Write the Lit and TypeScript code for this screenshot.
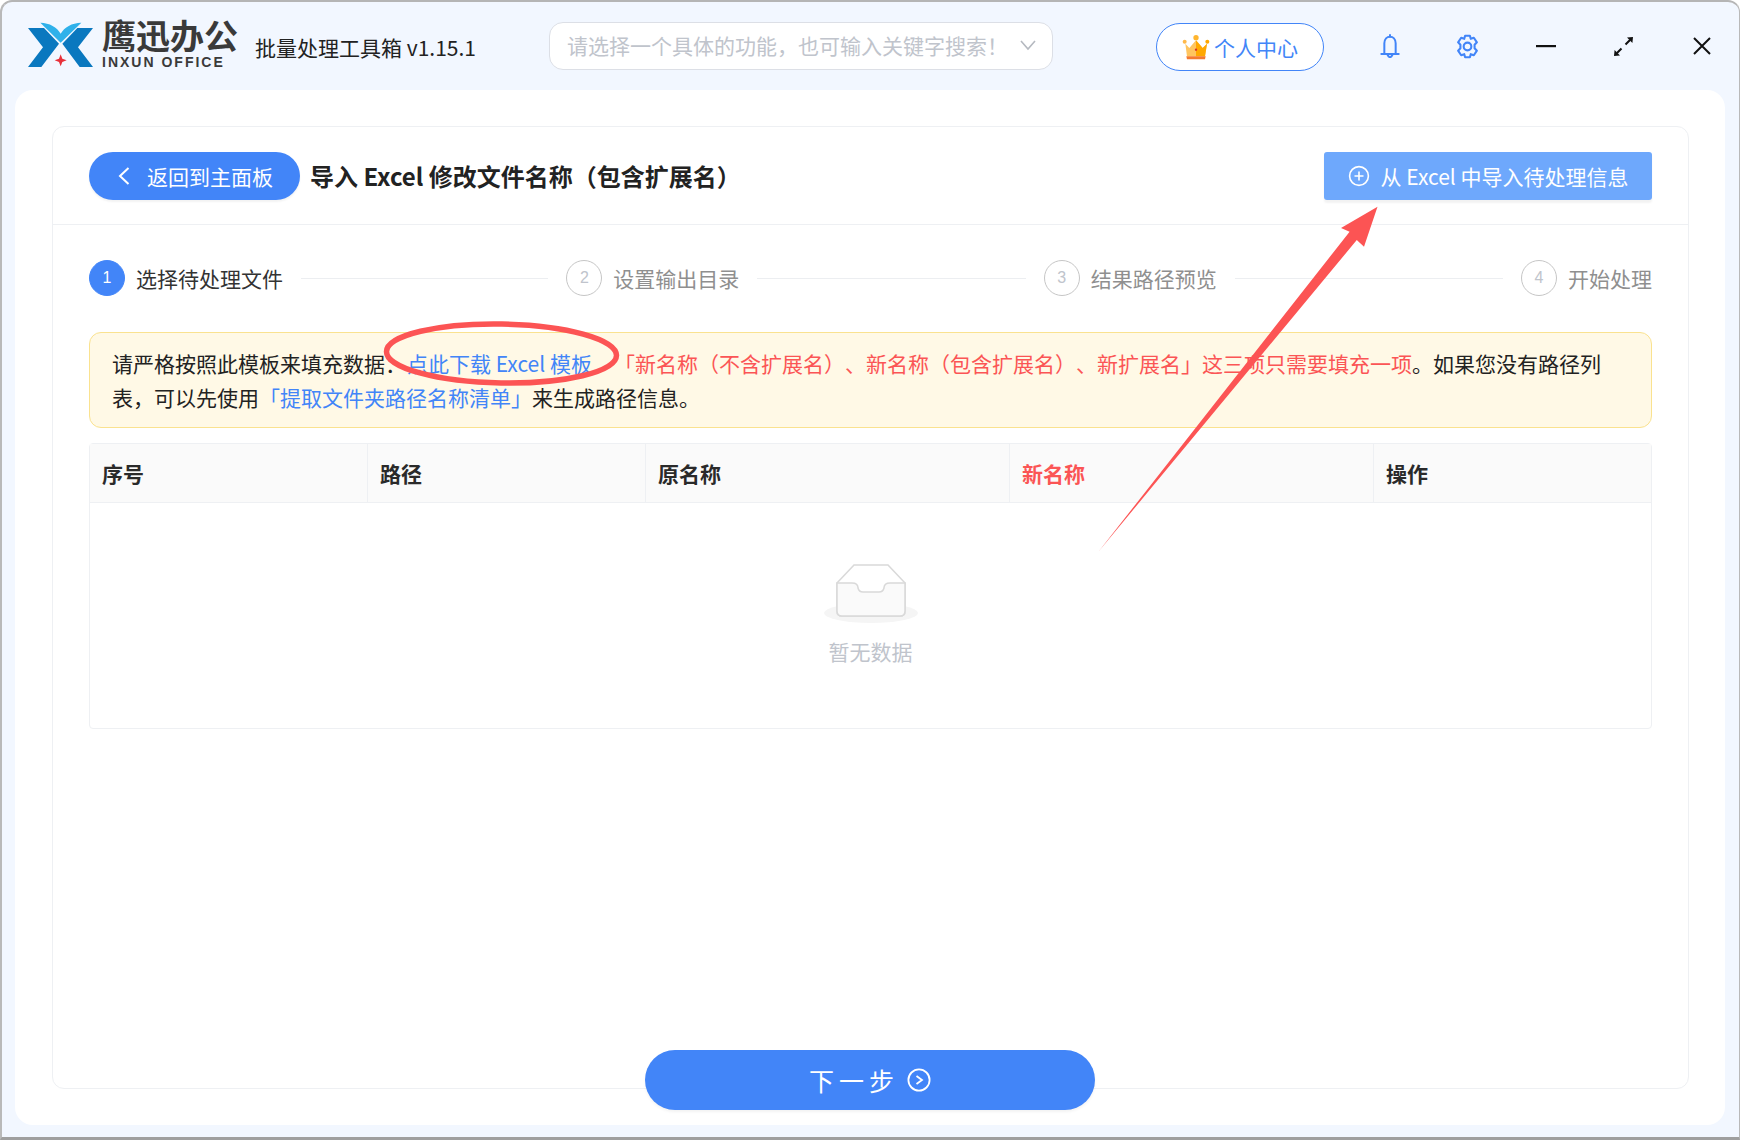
import { LitElement, html, css, svg } from "lit";
import { customElement } from "lit/decorators.js";

const steps = ["选择待处理文件", "设置输出目录", "结果路径预览", "开始处理"];

@customElement("app-root")
export class AppRoot extends LitElement {
  static styles = css`
    :host { display: block; width: 1740px; height: 1140px; font-family: "Noto Sans CJK SC", "Noto Sans", sans-serif; color: #262626; overflow: hidden; background: #fff; text-spacing-trim: space-all; }
    * { box-sizing: border-box; }
    .window { position: relative; width: 1740px; height: 1140px; background: #f2f7ff; border-style: solid; border-width: 2px 1px 3px 2px; border-color: #b5b5b5 #b9b9b9 #9f9f9f #b9b9b9; border-radius: 12px 12px 0 0; display: flex; flex-direction: column; }
    .titlebar { height: 88px; display: flex; align-items: center; flex: none; padding-left: 25px; }
    .logo { width: 67px; height: 46px; flex: none; margin-top: -3px; }
    .brand { margin-left: 8px; width: 139px; display: flex; flex-direction: column; color: #3a3a3a; flex: none; margin-top: -6px; }
    .brand b { font-size: 34px; line-height: 36px; font-weight: 700; white-space: nowrap; }
    .brand span { font-family: "Liberation Sans", sans-serif; font-weight: 700; font-size: 14px; line-height: 14px; letter-spacing: 2px; white-space: nowrap; margin-top: 2px; }
    .appname { margin-left: 14px; font-size: 21px; color: #222; width: 221px; white-space: nowrap; margin-top: 2px; }
    .search { margin-left: 73px; width: 504px; height: 48px; background: #fff; border: 1px solid #dcdfe6; border-radius: 14px; display: flex; align-items: center; justify-content: space-between; padding: 0 15px 2px 17px; color: #c0c4cc; font-size: 21px; flex: none; white-space: nowrap; }
    .search svg { width: 18px; height: 12px; }
    .vip { margin-left: 103px; margin-top: 2px; width: 168px; height: 48px; border: 1px solid #4285f8; border-radius: 24px; background: #fff; display: flex; align-items: center; justify-content: center; gap: 4px; color: #4285f8; font-size: 21px; flex: none; }
    .vip svg { width: 28px; height: 26px; flex: none; }
    .tools { margin-left: 27px; display: flex; align-items: center; }
    .tool { width: 78px; height: 40px; display: flex; align-items: center; justify-content: center; }
    .panel { flex: 1; margin: 0 14px 12px 13px; background: #fff; border-radius: 18px; padding: 36px 36px 0 37px; display: flex; flex-direction: column; min-height: 0; }
    .card { height: 963px; flex: none; border: 1px solid #eef0f3; border-radius: 12px; display: flex; flex-direction: column; }
    .cardhead { height: 98px; border-bottom: 1px solid #eef0f3; padding: 0 36px; display: flex; align-items: center; flex: none; }
    .back { width: 211px; height: 48px; border-radius: 24px; background: #4285f8; color: #fff; font-size: 21px; display: flex; align-items: center; padding-left: 28px; gap: 16px; box-shadow: 0 2px 2px rgba(0,0,0,.05); flex: none; }
    .title { margin-left: 10px; font-size: 24px; font-weight: 700; color: #222; white-space: nowrap; flex: 1; }
    .import { width: 328px; height: 48px; border-radius: 3px; background: #6ea8fc; color: #fff; font-size: 21px; display: flex; align-items: center; justify-content: center; gap: 11px; box-shadow: 0 3px 2px rgba(0,0,0,.05); white-space: nowrap; flex: none; }
    .content { padding: 35px 36px 0 36px; display: flex; flex-direction: column; }
    .steps { display: flex; align-items: center; height: 36px; }
    .step { display: flex; align-items: center; flex: 1 1 0; color: #8f8f8f; font-size: 21px; white-space: nowrap; }
    .step:last-child { flex: none; }
    .num { width: 36px; height: 36px; border-radius: 50%; border: 1px solid #c6c6c6; color: #c0c4cc; display: flex; align-items: center; justify-content: center; font-size: 16px; font-family: "Liberation Sans", sans-serif; margin-right: 11px; flex: none; }
    .step.on { color: #333; }
    .step.on .num { background: #4285f8; border-color: #4285f8; color: #fff; }
    .line { flex: 1; height: 1px; background: #eceef1; margin: 0 18px 0 18px; }
    .alert { margin-top: 36px; height: 96px; border: 1px solid #fae28f; border-radius: 12px; background: #fff9e6; padding: 13px 40px 0 22px; font-size: 21px; line-height: 34px; color: #222; }
    .link { color: #4285f8; }
    .first { margin-left: 1px; }
    .red { color: #fb5555; }
    .pad { margin: 0 11px; }
    .table { margin-top: 15px; height: 286px; border: 1px solid #eef0f3; border-radius: 4px; }
    .thead { height: 59px; background: #fafafa; border-bottom: 1px solid #eef0f3; display: grid; grid-template-columns: 278px 278px 364px 364px 1fr; }
    .th { display: flex; align-items: center; padding-left: 12px; padding-bottom: 1px; font-size: 21px; font-weight: 700; color: #2a2a2a; border-right: 1px solid #eef0f3; }
    .th:last-child { border-right: none; }
    .th.red { color: #fb5555; }
    .empty { display: flex; flex-direction: column; align-items: center; padding-top: 61px; color: #c0c4cc; font-size: 21px; }
    .empty svg { width: 94px; height: 60px; }
    .empty span { margin-top: 12px; line-height: 30px; }
    .next { flex: none; align-self: center; margin-top: -39px; margin-left: -1px; width: 450px; height: 60px; border-radius: 30px; background: #4285f8; color: #fff; font-size: 25px; display: flex; align-items: center; justify-content: center; gap: 8px; letter-spacing: 5px; position: relative; box-shadow: 0 2px 3px rgba(0,0,0,.05); }
    .next svg { flex: none; }
    .overlay { position: absolute; left: -2px; top: -2px; width: 1740px; height: 1140px; pointer-events: none; }
  `;

  private logo() {
    return html`<svg class="logo" viewBox="82 65 201 138">
      <path d="M85 83 H133 L178 130 L125 200 H85 L130 141 Z" fill="#0a78bf"/>
      <path d="M280 83 H233 L188 130 L240 200 H280 L235 141 Z" fill="#0a78bf"/>
      <path d="M122 67 C150 68 172 80 183 100 C194 80 216 68 245 67 L183 127 Z" fill="#2fb1ea"/>
      <path d="M183 162 L188 175 L201 180 L188 185 L183 198 L178 185 L165 180 L178 175 Z" fill="#e8303a"/>
    </svg>`;
  }

  private tools() {
    return html`<div class="tools">
      <div class="tool"><svg width="20" height="24" viewBox="0 0 60 72" fill="none" stroke="#4285f8" stroke-width="6" stroke-linecap="round"><path d="M13 59 V28 C13 15 21 8 30 8 C39 8 47 15 47 28 V59"/><path d="M4 60 H56"/><path d="M30 3 V8"/><path d="M23 63 Q30 76 37 63"/></svg></div>
      <div class="tool"><svg width="23" height="25" viewBox="0 0 24 26" fill="none" stroke="#4285f8" stroke-width="2.2" stroke-linejoin="round"><path d="M9.5 1.8 H14.5 L15.4 5 L18.6 3.9 L21.8 8.6 L19.4 11.2 V14.8 L21.8 17.4 L18.6 22.1 L15.4 21 L14.5 24.2 H9.5 L8.6 21 L5.4 22.1 L2.2 17.4 L4.6 14.8 V11.2 L2.2 8.6 L5.4 3.9 L8.6 5 Z"/><circle cx="12" cy="13" r="4"/></svg></div>
      <div class="tool"><svg width="20" height="4" viewBox="0 0 20 4"><rect y="1" width="20" height="2.2" fill="#111"/></svg></div>
      <div class="tool"><svg width="19" height="19" viewBox="0 0 19 19"><path d="M11.5 7.5 L16 3 M7.5 11.5 L3 16" stroke="#111" stroke-width="2"/><path d="M19 0 L13 .6 L18.4 6 Z M0 19 L6 18.4 L.6 13 Z" fill="#111"/></svg></div>
      <div class="tool"><svg width="18" height="18" viewBox="0 0 18 18"><path d="M1 1 L17 17 M17 1 L1 17" stroke="#111" stroke-width="2"/></svg></div>
    </div>`;
  }

  render() {
    return html`<div class="window">
      <div class="titlebar">
        ${this.logo()}
        <div class="brand"><b>鹰迅办公</b><span>INXUN OFFICE</span></div>
        <div class="appname">批量处理工具箱 v1.15.1</div>
        <div class="search"><span>请选择一个具体的功能，也可输入关键字搜索！</span><svg viewBox="0 0 18 12" fill="none" stroke="#b5b9c0" stroke-width="1.6"><path d="M2 2 L9 10 L16 2"/></svg></div>
        <div class="vip"><svg viewBox="28 46 84 78"><path d="M38 75 L50 88 L70 65 L90 88 L103 75 L97 113 H43 Z" fill="#ffc55f"/><path d="M70 65 L90 88 L103 75 L97 113 H70 Z" fill="#ffa800"/><path d="M41 113 H99 L97 122 H43 Z" fill="#f47a2f"/><circle cx="70" cy="57" r="8" fill="#ffb52e"/><circle cx="36" cy="69" r="6" fill="#ffb94a"/><circle cx="104" cy="69" r="6" fill="#ffa800"/><circle cx="70" cy="93" r="3.5" fill="#d9342b"/></svg><span>个人中心</span></div>
        ${this.tools()}
      </div>
      <div class="panel">
        <div class="card">
          <div class="cardhead">
            <div class="back"><svg width="14" height="20" viewBox="0 0 14 20" fill="none" stroke="#fff" stroke-width="2"><path d="M11.5 2 L3 10 L11.5 18"/></svg><span>返回到主面板</span></div>
            <div class="title">导入 Excel 修改文件名称（包含扩展名）</div>
            <div class="import"><svg width="22" height="22" viewBox="0 0 22 22" fill="none" stroke="#fff" stroke-width="1.6"><circle cx="11" cy="11" r="9.4"/><path d="M11 6.5 V15.5 M6.5 11 H15.5"/></svg><span>从 Excel 中导入待处理信息</span></div>
          </div>
          <div class="content">
            <div class="steps">
              ${steps.map((s, i) => html`<div class="step ${i === 0 ? "on" : ""}"><div class="num">${i + 1}</div><span>${s}</span>${i < steps.length - 1 ? html`<div class="line"></div>` : ""}</div>`)}
            </div>
            <div class="alert">请严格按照此模板来填充数据：<span class="link first">点此下载 Excel 模板</span><span class="pad"></span><span class="red">「新名称（不含扩展名）、新名称（包含扩展名）、新扩展名」这三项只需要填充一项</span>。如果您没有路径列表，可以先使用<span class="link">「提取文件夹路径名称清单」</span>来生成路径信息。</div>
            <div class="table">
              <div class="thead">
                <div class="th">序号</div><div class="th">路径</div><div class="th">原名称</div><div class="th red">新名称</div><div class="th">操作</div>
              </div>
              <div class="empty">
                <svg viewBox="0 0 94 60">
                  <ellipse cx="47" cy="49" rx="47" ry="10" fill="#f5f5f5"/>
                  <path d="M13 19 L30 1 H64 L81 19 V47 Q81 52 76 52 H18 Q13 52 13 47 Z" fill="#fff" stroke="#d9d9d9" stroke-width="1.5"/>
                  <path d="M13 19 H28 Q34 19 34 24 Q35 28 39 28 H55 Q59 28 60 24 Q60 19 66 19 H81 V47 Q81 52 76 52 H18 Q13 52 13 47 Z" fill="#fafafa" stroke="#d9d9d9" stroke-width="1.5"/>
                </svg>
                <span>暂无数据</span>
              </div>
            </div>
          </div>
        </div>
        <div class="next"><span>下一步</span><svg width="24" height="24" viewBox="0 0 24 24" fill="none" stroke="#fff" stroke-width="1.8"><circle cx="12" cy="12" r="10.6"/><path d="M9.5 8 L15 12 L9.5 16"/></svg></div>
      </div>
      <svg class="overlay" viewBox="0 0 1740 1140">
        ${svg`<ellipse cx="501.5" cy="353.5" rx="115" ry="29.5" fill="none" stroke="#fc5454" stroke-width="5.5" transform="rotate(1 501.5 353.5)"/>
        <path d="M1099 551 L1349.6 231.7 L1341 228 L1377.5 206.7 L1364 246.7 L1356.8 240 Z" fill="#fc5454"/>`}
      </svg>
    </div>`;
  }
}
